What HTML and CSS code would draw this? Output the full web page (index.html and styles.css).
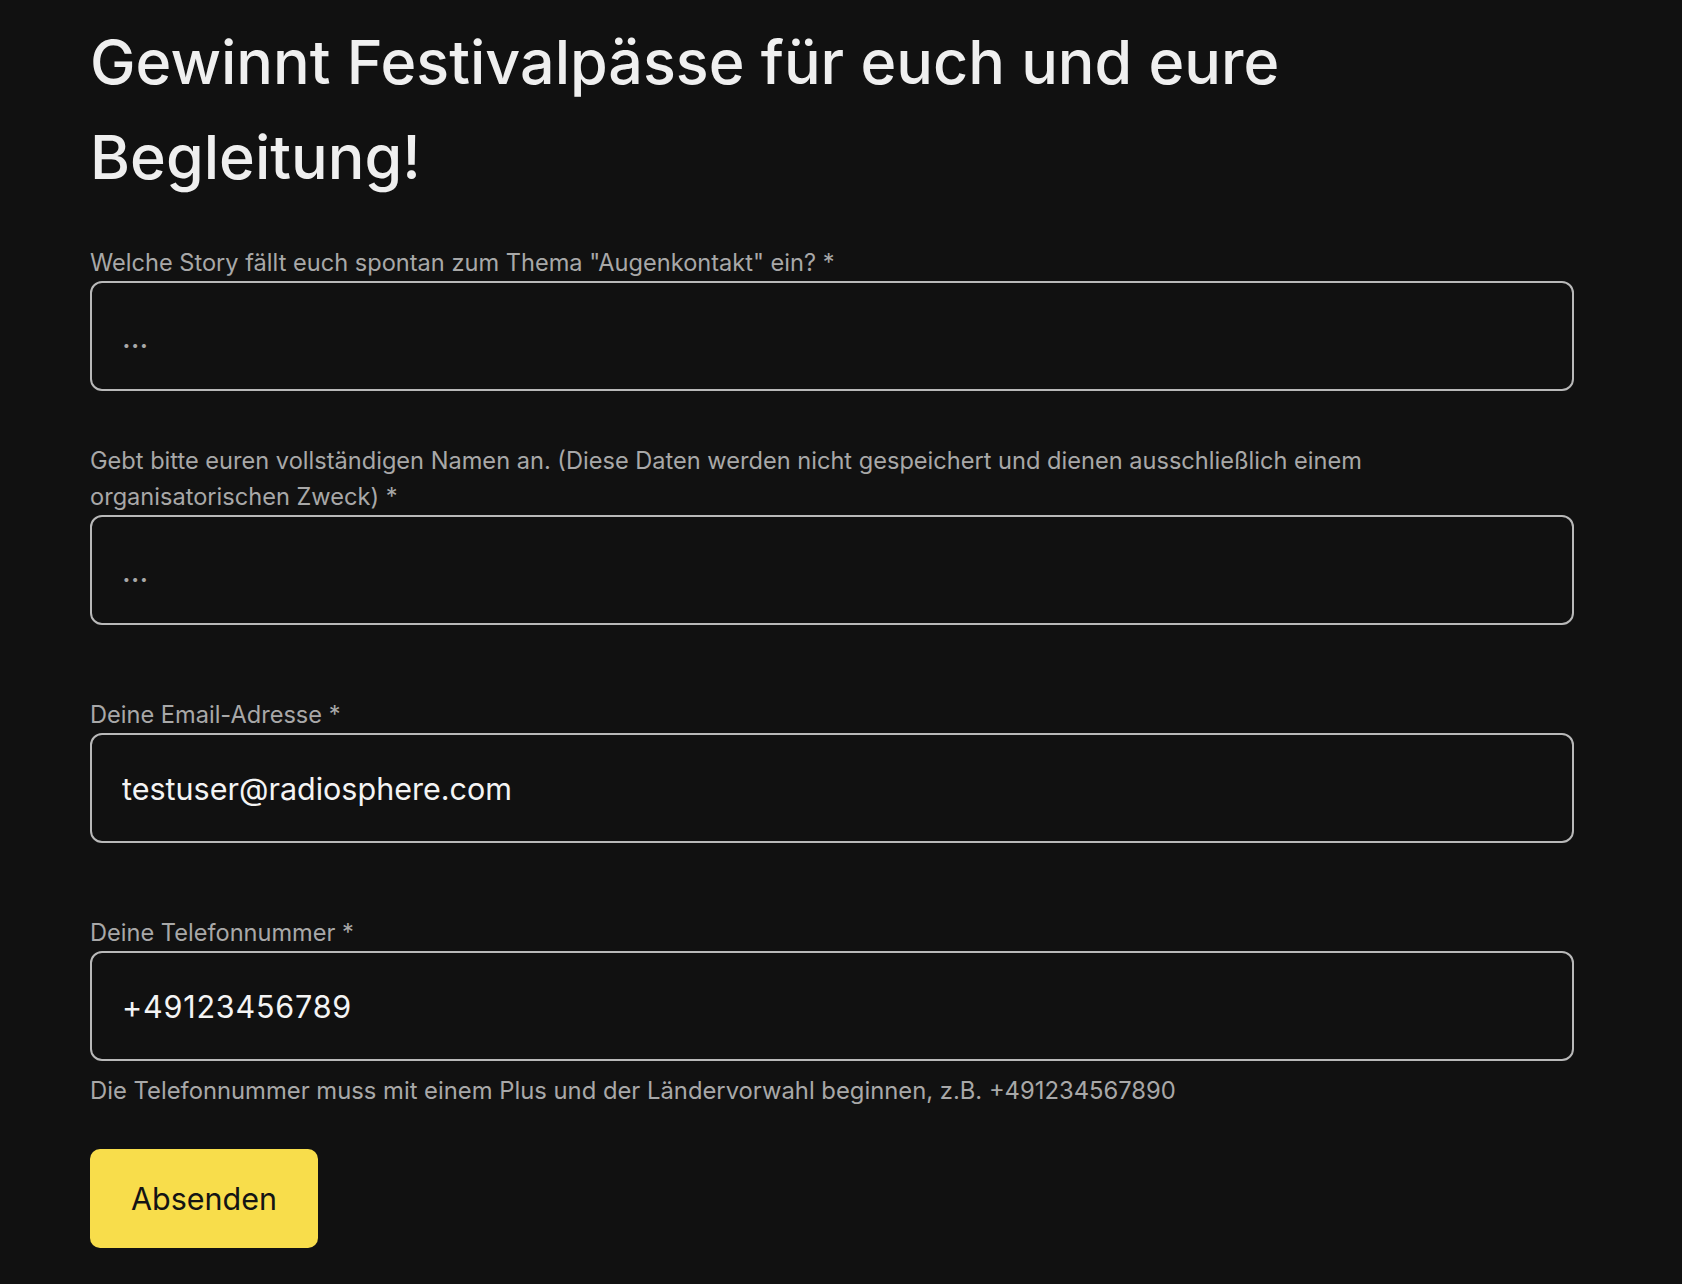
FILE: index.html
```html
<!DOCTYPE html>
<html lang="de">
<head>
<meta charset="utf-8">
<title>Gewinnspiel</title>
<link rel="stylesheet" href="styles.css">
</head>
<body>
<main class="page">
  <h1 class="title">Gewinnt Festivalpässe für euch und eure Begleitung!</h1>
  <form class="form">
    <div class="field field--first">
      <label class="label" for="story">Welche Story fällt euch spontan zum Thema "Augenkontakt" ein? *</label>
      <input class="input" id="story" type="text" placeholder="...">
    </div>
    <div class="field">
      <label class="label" for="name">Gebt bitte euren vollständigen Namen an. (Diese Daten werden nicht gespeichert und dienen ausschließlich einem organisatorischen Zweck) *</label>
      <input class="input" id="name" type="text" placeholder="...">
    </div>
    <div class="field">
      <label class="label" for="email">Deine Email-Adresse *</label>
      <input class="input" id="email" type="email" value="testuser@radiosphere.com">
    </div>
    <div class="field field--last">
      <label class="label" for="phone">Deine Telefonnummer *</label>
      <input class="input input--tel" id="phone" type="tel" value="+49123456789">
      <p class="hint">Die Telefonnummer muss mit einem Plus und der Ländervorwahl beginnen, z.B. +491234567890</p>
    </div>
    <button class="submit" type="submit">Absenden</button>
  </form>
</main>
</body>
</html>
```
FILE: styles.css
```css
html, body {
  margin: 0;
  padding: 0;
  background: #111111;
}

body {
  font-family: "Inter", "Noto Sans", "Liberation Sans", sans-serif;
  color: #f0f0f0;
  min-height: 1284px;
}

.page {
  padding: 15px 108px 0 90px;
}

.title {
  max-width: 1300px;
  margin: 0 0 40px;
  font-size: 61px;
  line-height: 95px;
  font-weight: 500;
  color: #efefef;
}

.form {
  display: flex;
  flex-direction: column;
  align-items: flex-start;
}

.field {
  display: flex;
  flex-direction: column;
  align-self: stretch;
  margin-bottom: 72px;
}

.field--first {
  margin-bottom: 52px;
}

.field--last {
  margin-bottom: 0;
}

.label {
  display: block;
  max-width: 1400px;
  font-size: 23.6px;
  line-height: 36px;
  color: #a8a8a8;
}

.input {
  box-sizing: border-box;
  height: 110px;
  width: 100%;
  margin: 0;
  padding: 0 30px;
  border: 2px solid #b9b9b9;
  border-radius: 12px;
  background: transparent;
  color: #f4f4f4;
  font-family: inherit;
  font-size: 30.5px;
  outline: none;
}

.input--tel {
  letter-spacing: 0.8px;
}

.input::placeholder {
  color: #a8a8a8;
  opacity: 1;
}

.hint {
  margin: 12px 0 0;
  font-size: 23.8px;
  line-height: 36px;
  color: #a8a8a8;
}

.submit {
  margin-top: 40px;
  height: 99px;
  padding: 0 41px;
  border: none;
  border-radius: 10px;
  background: #f8dd4b;
  color: #141414;
  font-family: inherit;
  font-size: 30.5px;
  cursor: pointer;
}
```
